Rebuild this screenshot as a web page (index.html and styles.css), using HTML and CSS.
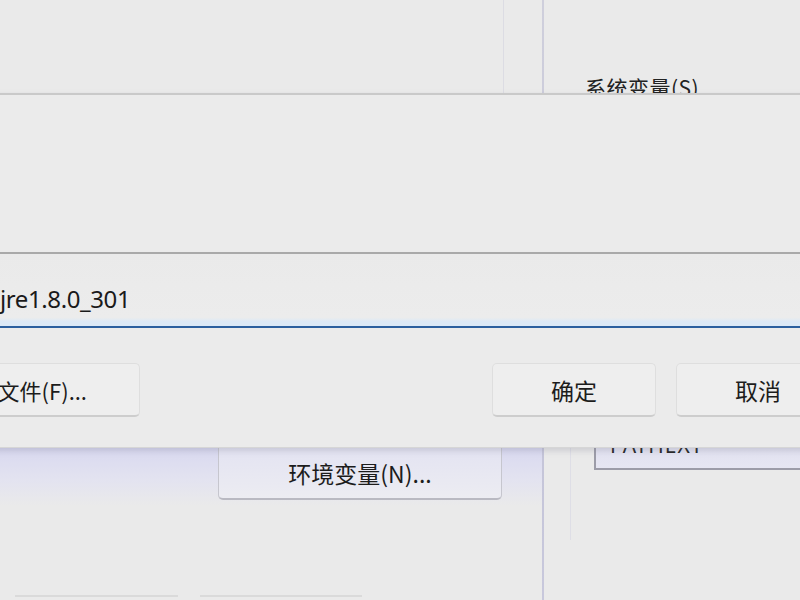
FILE: index.html
```html
<!DOCTYPE html>
<html lang="zh-CN">
<head>
<meta charset="utf-8">
<title>编辑系统变量</title>
<link rel="stylesheet" href="styles.css">
</head>
<body>
<div class="screen">
  <div class="bgwin">
    <div class="left-pane">
      <div class="left-top">
        <div class="faint-v"></div>
      </div>
      <div class="band">
        <button class="env-btn">环境变量(<u>N</u>)...</button>
      </div>
      <div class="left-bottom">
        <div class="stub s1"></div>
        <div class="stub s2"></div>
      </div>
    </div>
    <div class="divider"></div>
    <div class="right-pane">
      <div class="sys-label">系统变量(S)</div>
      <div class="right-body">
        <div class="faint-v2"></div>
        <div class="var-box"><span class="var-name">PATHEXT</span></div>
      </div>
    </div>
  </div>

  <div class="dialog">
    <div class="dlg-upper"></div>
    <div class="dlg-rule"></div>
    <div class="dlg-input">
      <span class="value">jre1.8.0_301</span>
    </div>
    <div class="dlg-buttons">
      <button class="btn browse">浏览文件(<u>F</u>)...</button>
      <div class="spacer"></div>
      <button class="btn ok">确定</button>
      <button class="btn cancel">取消</button>
    </div>
  </div>
</div>
</body>
</html>
```

FILE: styles.css
```css
* { box-sizing: border-box; }
html, body { margin: 0; padding: 0; }
body {
  background: #eaeaea;
  font-family: "Noto Sans", "Noto Sans CJK SC", sans-serif;
  color: #1c1c1c;
}
.screen {
  position: relative;
  width: 800px;
  height: 600px;
  overflow: hidden;
  background: #eaeaea;
}

/* background window */
.bgwin {
  display: flex;
  height: 600px;
}
.left-pane {
  width: 542px;
  flex-shrink: 0;
  display: flex;
  flex-direction: column;
}
.left-top {
  height: 440px;
}
.faint-v {
  margin-left: 503px;
  width: 1px;
  height: 93px;
  background: #dcdce3;
}
.band {
  height: 66px;
  padding-left: 218px;
  background: linear-gradient(#d2d2ef 0px, #dadaf0 12px, #e3e3f0 40px, #eaeaea 66px);
}
.env-btn {
  width: 284px;
  height: 60px;
  margin: 0;
  padding: 6px 0 0 0;
  border: 1px solid #c6c6ce;
  border-bottom: 2px solid #b9b9c2;
  border-radius: 5px;
  background: linear-gradient(#e2e2f2, #ececf2);
  font-family: "Noto Sans CJK SC", "Noto Sans", sans-serif;
  font-size: 23px;
  color: #1c1c1c;
}
.env-btn u, .btn u { text-decoration: none; }
.left-bottom {
  flex: 1;
  display: flex;
  align-items: flex-end;
  gap: 22px;
  padding: 0 0 3px 15px;
}
.stub {
  height: 2px;
  background: #dadada;
}
.s1 { width: 163px; }
.s2 { width: 162px; }

.divider {
  width: 2px;
  flex-shrink: 0;
  background: linear-gradient(#cfcfdc, #c4c4d8 70%, #c8c8dc);
}
.right-pane {
  flex: 1;
  min-width: 0;
  overflow: hidden;
  display: flex;
  flex-direction: column;
}
.sys-label {
  padding: 74px 0 0 41px;
  height: 110px;
  font-family: "Noto Sans CJK SC", "Noto Sans", sans-serif;
  font-size: 21px;
  line-height: 26px;
  letter-spacing: 0.5px;
  color: #222;
}
.right-body {
  flex: 1;
  position: relative;
  padding-top: 312px;
}
.faint-v2 {
  position: absolute;
  left: 26px;
  top: 330px;
  width: 1px;
  height: 100px;
  background: #dedee6;
}
.var-box {
  margin-left: 50px;
  width: 260px;
  height: 48px;
  border: 2px solid #9c9ca8;
  border-top: none;
  background: linear-gradient(#dcdcef, #e6e6f2);
  padding: 10px 0 0 14px;
}
.var-name {
  font-size: 21px;
  line-height: 26px;
  letter-spacing: 1px;
  color: #222;
}

/* dialog over the window */
.dialog {
  position: absolute;
  top: 93px;
  left: -130px;
  width: 990px;
  height: 355px;
  background: #ebebeb;
  border-top: 2px solid #c9c9c9;
  border-bottom: 1px solid #d6d6d6;
  box-shadow: 0 3px 6px rgba(120, 120, 140, 0.25);
  display: flex;
  flex-direction: column;
}
.dlg-upper {
  height: 157px;
}
.dlg-rule {
  height: 2px;
  background: #a9a9a9;
}
.dlg-input {
  height: 74px;
  padding: 30px 0 0 130px;
  background: linear-gradient(#eaeaea 0, #ececec 88%, #dce9f6 94%, #dce9f6 100%);
  border-bottom: 2px solid #2c5f9e;
}
.value {
  font-family: "Noto Sans", sans-serif;
  font-size: 24px;
  line-height: 30px;
  letter-spacing: -0.4px;
  color: #1a1a1a;
}
.dlg-buttons {
  display: flex;
  gap: 20px;
  padding: 35px 20px 0 10px;
}
.spacer { flex: 1; }
.btn {
  height: 54px;
  margin: 0;
  padding: 0;
  border: 1px solid #dedede;
  border-bottom: 2px solid #cdcdcd;
  border-radius: 5px;
  background: #eeeeee;
  font-family: "Noto Sans CJK SC", "Noto Sans", sans-serif;
  font-size: 22px;
  color: #1c1c1c;
}
.browse {
  width: 260px;
  text-align: right;
  padding-right: 52px;
}
.ok, .cancel { width: 164px; font-size: 23px; }
```
